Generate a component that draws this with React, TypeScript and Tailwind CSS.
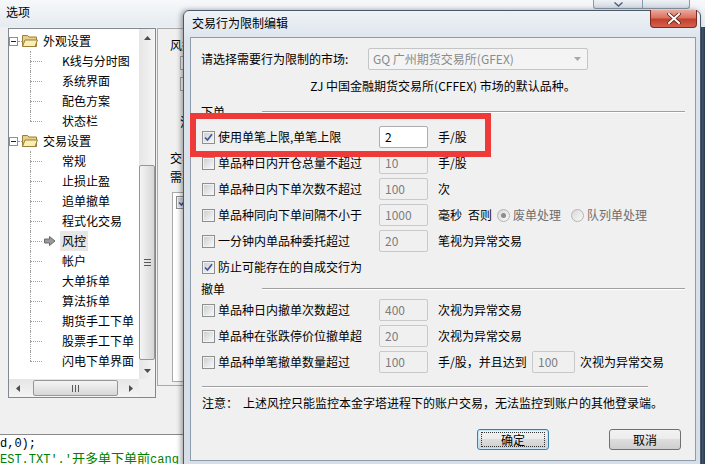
import React from 'react';

const line = 'border-[#a0a0a0]';

function Folder() {
  return (
    <svg width="16" height="14" viewBox="0 0 16 14" className="shrink-0">
      <path d="M0.5 1.5 h5 l1.5 1.5 h7.5 v9.5 h-14z" fill="#e6cf86" stroke="#9a7e3c" />
      <path d="M0.5 12.5 l2.5 -6.5 h12.5 l-2.5 6.5z" fill="#fcefb4" stroke="#9a7e3c" />
    </svg>
  );
}

function TreeTop({ label }: { label: string }) {
  return (
    <div className="flex h-[20px] items-center">
      <span className="flex h-[9px] w-[9px] shrink-0 items-center justify-center border border-[#919191] bg-white">
        <span className="h-px w-[5px] bg-[#222]" />
      </span>
      <span className={`w-[4px] border-t border-dotted ${line}`} />
      <Folder />
      <span className="ml-[5px]">{label}</span>
    </div>
  );
}

function TreeChild({ label, last, active }: { label: string; last?: boolean; active?: boolean }) {
  return (
    <div className="flex h-[20px]">
      <span className="w-[21px] shrink-0" />
      <span className="flex w-[12px] shrink-0 flex-col">
        <span className={`h-[10px] border-l border-dotted ${line}`} />
        <span className={`h-[10px] border-t border-dotted ${line} ${last ? '' : 'border-l'}`} />
      </span>
      {active ? (
        <div className="flex items-center">
          <svg width="12" height="10" viewBox="0 0 12 10" className="ml-[2px] shrink-0">
            <path d="M0.5 3 h5 v-2.5 l5.5 4.5 l-5.5 4.5 v-2.5 h-5z" fill="#9a9a9a" stroke="#6a6a6a" />
          </svg>
          <span className="ml-[4px] flex h-[20px] items-center bg-[#e6e6e6] px-[2px]">{label}</span>
        </div>
      ) : (
        <span className="ml-[20px] flex items-center">{label}</span>
      )}
    </div>
  );
}

function Arrow({ dir }: { dir: 'up' | 'down' | 'left' | 'right' }) {
  const d = {
    up: 'M0 4 L3.5 0 L7 4z',
    down: 'M0 0 L7 0 L3.5 4z',
    left: 'M4 0 L4 7 L0 3.5z',
    right: 'M0 0 L4 3.5 L0 7z',
  }[dir];
  const vertical = dir === 'up' || dir === 'down';
  return (
    <svg width={vertical ? 7 : 4} height={vertical ? 4 : 7} viewBox={vertical ? '0 0 7 4' : '0 0 4 7'}>
      <path d={d} fill="#4d4d4d" />
    </svg>
  );
}

function CheckBox({ checked }: { checked?: boolean }) {
  return (
    <span className="flex h-[13px] w-[13px] shrink-0 items-center justify-center border border-[#8e8f8f] bg-white">
      <span className="flex h-[11px] w-[11px] items-center justify-center border border-[#f2f2f2] bg-gradient-to-br from-[#cdd0d4] to-[#f7f7f7]">
        {checked && (
          <svg width="9" height="9" viewBox="0 0 9 9">
            <path d="M1 4.5 L3.5 7 L8 1.2" fill="none" stroke="#43579a" strokeWidth="1.7" />
          </svg>
        )}
      </span>
    </span>
  );
}

function Radio({ on }: { on?: boolean }) {
  return (
    <span className="flex h-[13px] w-[13px] shrink-0 items-center justify-center rounded-full border border-[#b4b4b4] bg-gradient-to-br from-[#dadada] to-[#f8f8f8]">
      {on && <span className="h-[5px] w-[5px] rounded-full bg-[#8c8c8c]" />}
    </span>
  );
}

function Field({ value, enabled }: { value: string; enabled?: boolean }) {
  return (
    <span
      className={`flex h-[22px] w-[49px] shrink-0 items-center rounded-[2px] border pl-[5px] ${
        enabled ? 'border-[#abadb3] bg-white text-black' : 'border-[#c9c9c9] bg-[#f0f0f0] text-[#7d7d7d]'
      }`}
    >
      {value}
    </span>
  );
}

function Row({ checked, label, children }: { checked?: boolean; label: string; children?: React.ReactNode }) {
  return (
    <div className="flex h-[26px] items-center pl-[1px]">
      <div className="flex w-[177px] shrink-0 items-center gap-[3px]">
        <CheckBox checked={checked} />
        <span>{label}</span>
      </div>
      {children}
    </div>
  );
}

function GroupHeader({ label, h }: { label: string; h: string }) {
  return (
    <div className={`flex items-center ${h}`}>
      <span>{label}</span>
      <span className="ml-[37px] flex flex-1 flex-col">
        <span className="h-px bg-[#a0a0a0]" />
        <span className="h-px bg-white" />
      </span>
    </div>
  );
}

function Button({ label, focused }: { label: string; focused?: boolean }) {
  return (
    <div
      className={`flex h-[21px] w-[72px] items-center justify-center rounded-[3px] border bg-[linear-gradient(to_bottom,#f2f2f2_0%,#ebebeb_50%,#dddddd_50%,#cfcfcf_100%)] ${
        focused ? 'border-[#3c7fb1] shadow-[inset_0_0_0_1px_#c4e5f6]' : 'border-[#707070]'
      }`}
    >
      {focused ? (
        <span className="flex h-[15px] w-[64px] items-center justify-center border border-dotted border-[#333]">{label}</span>
      ) : (
        label
      )}
    </div>
  );
}

const treeItems: { label: string; top?: boolean; last?: boolean; active?: boolean }[] = [
  { label: '外观设置', top: true },
  { label: 'K线与分时图' },
  { label: '系统界面' },
  { label: '配色方案' },
  { label: '状态栏', last: true },
  { label: '交易设置', top: true },
  { label: '常规' },
  { label: '止损止盈' },
  { label: '追单撤单' },
  { label: '程式化交易' },
  { label: '风控', active: true },
  { label: '帐户' },
  { label: '大单拆单' },
  { label: '算法拆单' },
  { label: '期货手工下单' },
  { label: '股票手工下单' },
  { label: '闪电下单界面', last: true },
];

export default function App() {
  return (
    <div className="relative h-[464px] w-[705px] overflow-hidden bg-white font-['Noto_Sans_CJK_SC','Liberation_Sans',sans-serif] text-[12px] leading-[14px] text-black">
      {/* background window: 选项 */}
      <div className="flex h-full flex-col">
        <div className="flex h-[27px] shrink-0 bg-gradient-to-b from-[#f6f8fa] to-[#e6ebf0]">
          <span className="pl-[6px] pt-[5px]">选项</span>
          <div className="ml-auto mr-[15px] flex items-start">
            <span className="flex h-[9px] w-[50px] items-center justify-center rounded-bl-[3px] border border-t-0 border-[#8c99a8] bg-gradient-to-b from-[#eef1f5] to-[#d3dbe4]">
              <svg width="9" height="5" viewBox="0 0 9 5">
                <path d="M0.5 0.5 L4.5 4 L8.5 0.5" fill="none" stroke="#50607a" strokeWidth="1.4" />
              </svg>
            </span>
            <span className="h-[9px] w-[47px] rounded-br-[3px] border border-l-0 border-t-0 border-[#8c99a8] bg-gradient-to-b from-[#eef1f5] to-[#d3dbe4]" />
          </div>
        </div>

        <div className="flex flex-1">
          <div className="flex flex-1 flex-col">
            <div className="flex h-[407px] bg-[#f0f0f0] pl-[8px] pt-[1px]">
              {/* tree panel */}
              <div className="flex h-[370px] w-[148px] shrink-0 flex-col border border-[#828790] bg-white">
                <div className="flex h-[350px]">
                  <div className="flex w-[130px] flex-col overflow-hidden pt-[2px] leading-[14px]">
                    {treeItems.map((it) =>
                      it.top ? (
                        <TreeTop key={it.label} label={it.label} />
                      ) : (
                        <TreeChild key={it.label} label={it.label} last={it.last} active={it.active} />
                      )
                    )}
                  </div>
                  <div className="flex w-[16px] flex-col bg-gradient-to-r from-[#e6e6e6] to-[#f4f4f4]">
                    <span className="flex h-[17px] items-center justify-center">
                      <Arrow dir="up" />
                    </span>
                    <span className="h-[119px]" />
                    <span className="flex h-[195px] items-center justify-center rounded-[2px] border border-[#979797] bg-gradient-to-r from-[#f4f4f4] via-[#e6e6e6] to-[#d6d6d6]">
                      <span className="flex w-[7px] flex-col gap-[2px]">
                        <span className="h-px bg-[#5a5a5a]" />
                        <span className="h-px bg-[#5a5a5a]" />
                        <span className="h-px bg-[#5a5a5a]" />
                      </span>
                    </span>
                    <span className="flex-1" />
                    <span className="flex h-[17px] items-center justify-center">
                      <Arrow dir="down" />
                    </span>
                  </div>
                </div>
                <div className="flex h-[18px]">
                  <div className="flex w-[130px] items-center bg-gradient-to-b from-[#e6e6e6] to-[#f4f4f4]">
                    <span className="flex w-[17px] justify-center">
                      <Arrow dir="left" />
                    </span>
                    <span className="ml-[7px] flex h-[16px] w-[85px] items-center justify-center gap-[2px] rounded-[2px] border border-[#979797] bg-gradient-to-b from-[#f4f4f4] via-[#e6e6e6] to-[#d6d6d6]">
                      <span className="h-[7px] w-px bg-[#5a5a5a]" />
                      <span className="h-[7px] w-px bg-[#5a5a5a]" />
                      <span className="h-[7px] w-px bg-[#5a5a5a]" />
                    </span>
                    <span className="ml-auto flex w-[17px] justify-center">
                      <Arrow dir="right" />
                    </span>
                  </div>
                  <div className="flex-1 bg-[#f0f0f0]" />
                </div>
              </div>

              {/* right settings panel (mostly hidden) */}
              <div className="ml-px flex h-[358px] w-[300px] shrink-0 flex-col border border-[#a9a9a9] pl-[12px] pt-[9px]">
                <span>风控设置</span>
                <span className="ml-[10px] mt-[4px] h-[14px] w-[60px] border border-[#a5a5a5] bg-white" />
                <span className="ml-[10px] mt-[7px] h-[14px] w-[60px] border border-[#a5a5a5] bg-white" />
                <span className="ml-[10px] mt-[24px]">注意事项</span>
                <span className="mt-[22px]">交易行为限制</span>
                <span className="mt-[5px]">需要设置的市场</span>
                <div className="ml-[2px] mt-[8px] h-[190px] w-[200px] border border-[#a9a9a9] bg-white p-[3px]">
                  <CheckBox checked />
                </div>
              </div>
            </div>
            <div className="h-px bg-[#8a8a8a]" />
            <div className="flex flex-1 flex-col bg-white pt-[2px] font-['Liberation_Mono','Noto_Sans_CJK_SC',monospace] text-[12px] leading-[14px]">
              <span>d,0);</span>
              <span className="whitespace-nowrap text-[#008000]">
                EST.TXT'.'<span className="font-['Noto_Sans_CJK_SC',sans-serif] text-[13px]">开多单下单前</span>cang
              </span>
            </div>
          </div>
          <div className="w-[5px] bg-gradient-to-r from-[#1f2d3d] via-[#41566f] to-[#2a3a4d]" />
        </div>
      </div>

      {/* dialog: 交易行为限制编辑 */}
      <div className="absolute left-[183px] top-[10px] flex h-[458px] w-[518px] flex-col rounded-t-[6px] border border-[#4b5a6b] bg-[linear-gradient(to_bottom,#eef2f6,#dbe3ec_30px,#d6dee8)] pb-[6px] pl-[6px] pr-[4px] shadow-[-2px_0_5px_rgba(0,0,0,0.35)]">
        <div className="flex h-[26px] shrink-0">
          <span className="pl-[2px] pt-[5px]">交易行为限制编辑</span>
          <div className="-mr-px -mt-px ml-auto flex h-[18px] w-[47px] items-center justify-center rounded-b-[4px] border border-t-0 border-[#7a2c24] bg-[linear-gradient(to_bottom,#eaa99c_0%,#d9735f_45%,#c2402e_55%,#d5624d_100%)]">
            <svg width="14" height="11" viewBox="0 0 14 11">
              <path d="M2 1 L12 10 M12 1 L2 10" stroke="#5a1d15" strokeWidth="3.6" strokeLinecap="square" />
              <path d="M2 1 L12 10 M12 1 L2 10" stroke="#ffffff" strokeWidth="2" strokeLinecap="square" />
            </svg>
          </div>
        </div>

        <div className="relative flex flex-1 flex-col border border-[#8e9bab] bg-[#f0f0f0] px-[10px] pt-[10px]">
          <div className="flex h-[22px] items-center">
            <span className="w-[167px] shrink-0">请选择需要行为限制的市场:</span>
            <div className="flex h-[22px] w-[220px] items-center rounded-[2px] border border-[#c5c5c5] bg-[#f4f4f4] pl-[4px] pr-[6px] text-[#8a8a8a]">
              <span>GQ 广州期货交易所(GFEX)</span>
              <svg width="7" height="4" viewBox="0 0 7 4" className="ml-auto">
                <path d="M0 0 L7 0 L3.5 4z" fill="#a8a8a8" />
              </svg>
            </div>
          </div>
          <div className="mt-[6px] flex h-[20px] items-center justify-center">ZJ 中国金融期货交易所(CFFEX) 市场的默认品种。</div>

          <GroupHeader label="下单" h="mt-[6px] h-[20px]" />
          <div className="mt-[2px] flex flex-col">
            <Row checked label="使用单笔上限,单笔上限">
              <Field value="2" enabled />
              <span className="ml-[10px]">手/股</span>
            </Row>
            <Row label="单品种日内开仓总量不超过">
              <Field value="10" />
              <span className="ml-[10px]">手/股</span>
            </Row>
            <Row label="单品种日内下单次数不超过">
              <Field value="100" />
              <span className="ml-[10px]">次</span>
            </Row>
            <Row label="单品种同向下单间隔不小于">
              <Field value="1000" />
              <span className="ml-[10px]">毫秒</span>
              <span className="ml-[6px]">否则</span>
              <span className="ml-[5px]">
                <Radio on />
              </span>
              <span className="ml-[3px] text-[#6d6d6d]">废单处理</span>
              <span className="ml-[10px]">
                <Radio />
              </span>
              <span className="ml-[3px] text-[#6d6d6d]">队列单处理</span>
            </Row>
            <Row label="一分钟内单品种委托超过">
              <Field value="20" />
              <span className="ml-[10px]">笔视为异常交易</span>
            </Row>
            <div className="flex h-[26px] items-center gap-[3px] pl-[1px]">
              <CheckBox checked />
              <span>防止可能存在的自成交行为</span>
            </div>
          </div>

          <GroupHeader label="撤单" h="h-[17px]" />
          <div className="flex flex-col">
            <Row label="单品种日内撤单次数超过">
              <Field value="400" />
              <span className="ml-[10px]">次视为异常交易</span>
            </Row>
            <Row label="单品种在张跌停价位撤单超">
              <Field value="20" />
              <span className="ml-[10px]">次视为异常交易</span>
            </Row>
            <Row label="单品种单笔撤单数量超过">
              <Field value="100" />
              <span className="ml-[10px] w-[94px] shrink-0">手/股，并且达到</span>
              <span className="flex h-[22px] w-[43px] shrink-0 items-center rounded-[2px] border border-[#c9c9c9] bg-[#f0f0f0] pl-[5px] text-[#7d7d7d]">
                100
              </span>
              <span className="ml-[5px]">次视为异常交易</span>
            </Row>
          </div>

          <div className="ml-px mt-[11px] flex w-[446px] flex-col">
            <span className="h-px bg-[#a0a0a0]" />
            <span className="h-px bg-white" />
          </div>
          <div className="ml-px mt-[5px] flex h-[20px] items-center">
            <span className="w-[41px] shrink-0">注意：</span>
            <span>上述风控只能监控本金字塔进程下的账户交易，无法监控到账户的其他登录端。</span>
          </div>
          <div className="mt-[16px] flex">
            <div className="ml-[276px]">
              <Button label="确定" focused />
            </div>
            <div className="ml-[60px]">
              <Button label="取消" />
            </div>
          </div>

          {/* red annotation box */}
          <div className="absolute left-[-1px] top-[75px] h-[44px] w-[301px] border-[6px] border-[#ef3a3a]" />
        </div>
      </div>
    </div>
  );
}
